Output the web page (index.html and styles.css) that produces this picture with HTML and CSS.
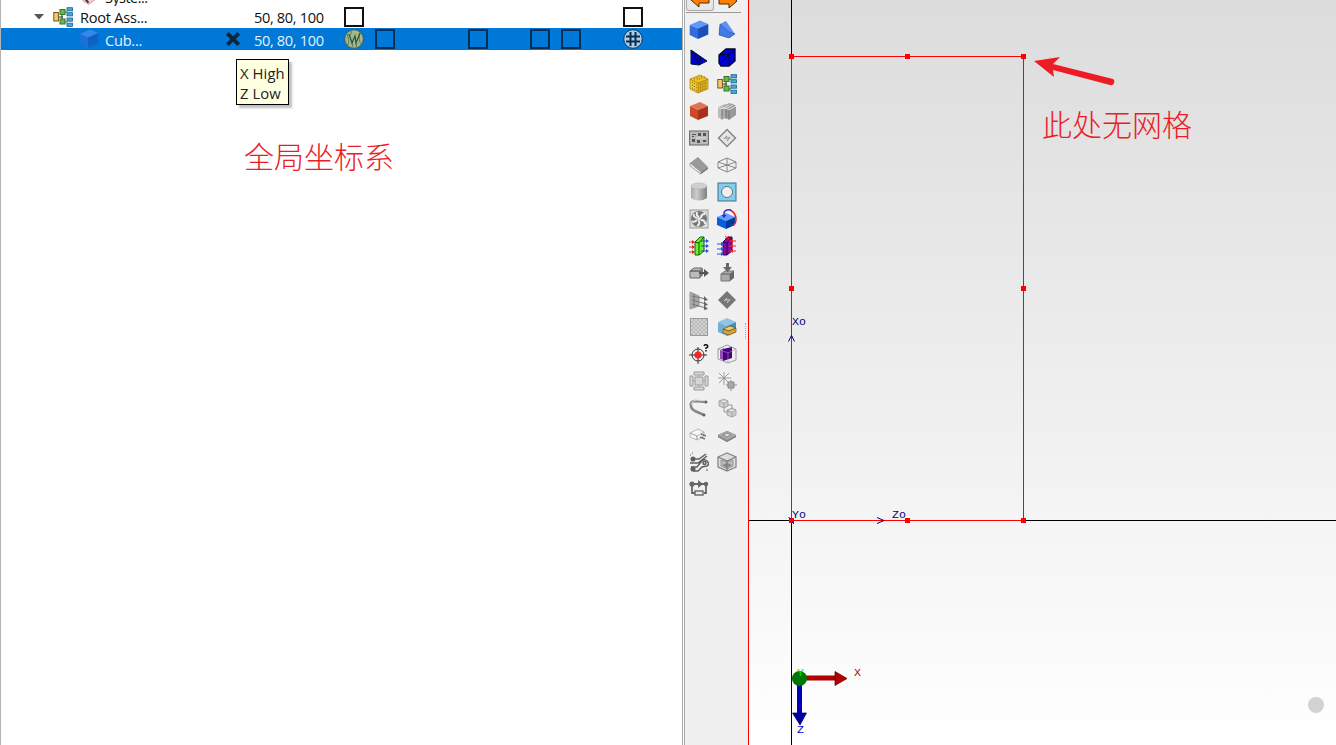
FILE: index.html
```html
<!DOCTYPE html>
<html lang="zh-CN">
<head>
<meta charset="utf-8">
<title>Model editor</title>
<link rel="stylesheet" href="styles.css">
</head>
<body>
<svg class="defs" aria-hidden="true">
<defs>
<symbol id="tree" viewBox="0 0 20 20"><path d="M6 10h4M9 5v11M9 5h5M9 15h5M14 3h2M14 8h2M14 13h2M14 18h2" fill="none" stroke="#333"/><rect x=".8" y="5.5" width="4.6" height="8.5" fill="#f1ca73" stroke="#765719"/><rect x="7" y="2.5" width="5" height="5" fill="#64ba45" stroke="#34752b"/><rect x="7" y="12" width="5" height="5" fill="#64ba45" stroke="#34752b"/><g fill="#48a7dd" stroke="#176489" stroke-width=".8"><rect x="14" y=".7" width="5.5" height="3.2"/><rect x="14" y="5.7" width="5.5" height="3.2"/><rect x="14" y="11" width="5.5" height="3.2"/><rect x="14" y="16.2" width="5.5" height="3.2"/></g></symbol>
<symbol id="blue-cube" viewBox="0 0 20 20"><path d="M.7 5 11 .5 19.3 4 9 8.500z" fill="#5d98fa"/><path d="M.7 5 9 8.500V19L.7 15z" fill="#326dde"/><path d="M9 8.500 19.3 4v10.500L9 19z" fill="#1d4fb8"/></symbol>
</defs>
</svg>
<main class="app">
<section class="tree-panel">
  <div class="tree-row clipped"><svg class="clip-icon" viewBox="0 0 16 20"><path d="m1 15 5-7 9 5-8 6z" fill="#f8cdd0" stroke="#e08b90"/><path d="M4 14l3 3" stroke="#333" stroke-width="2"/></svg><span class="system-label">Syste...</span></div>
  <div class="tree-row root">
    <svg class="disclosure" viewBox="0 0 10 6"><path d="M0 0h10L5 5.500z" fill="#555"/></svg>
    <svg class="node-icon"><use href="#tree"/></svg><span class="name">Root Ass...</span><span></span><span class="size">50, 80, 100</span><i class="check c1"></i><i class="check c6"></i>
  </div>
  <div class="tree-row selected">
    <svg class="cube-icon"><use href="#blue-cube"/></svg><span class="name">Cub...</span>
    <svg class="cross" viewBox="0 0 14 14"><path d="m2 2 10 10M12 2 2 12" stroke="#08283f" stroke-width="3.400"/></svg><span class="size">50, 80, 100</span>
    <svg class="round c1" viewBox="0 0 20 20"><circle cx="10" cy="10" r="9.300" fill="#a5b985" stroke="#40605c"/><path d="M3 5q3 6 1 11M7 2q1 3-1 4m10-2q-2 7 1 11M8 14l1 4m4-4-1 4" fill="none" stroke="#627a54"/><path d="m5 5 3 9 3-7 1 7 4-10" fill="none" stroke="#294f4c" stroke-width="1.200"/></svg>
    <i class="check c2"></i><i class="check c3"></i><i class="check c4"></i><i class="check c5"></i>
    <svg class="round c6" viewBox="0 0 20 20"><circle cx="10" cy="10" r="9.300" fill="#a8ccef" stroke="#103650"/><path d="M7.500 3v14M12.500 3v14M3 7.500h14M3 12.500h14" stroke="#092d48" stroke-width="2"/></svg>
  </div>
  <div class="tooltip"><span>X High</span><span>Z Low</span></div>
  <p class="note note-left">全局坐标系</p>
</section>
<aside class="toolbar">
  <div class="history">
    <span class="active"><svg viewBox="0 0 20 20"><path d="m1 12 8-7v4h10v6H9v4z" transform="matrix(1 0 0 -1 0 24)" fill="#ff8000" stroke="#552b00"/></svg></span>
    <span><svg viewBox="0 0 20 20"><path d="m19 12-8-7v4H1v6h10v4z" transform="matrix(1 0 0 -1 0 24)" fill="#ff8000" stroke="#552b00"/></svg></span>
  </div>
  <div class="tools">
    <svg><use href="#blue-cube"/></svg>
    <svg viewBox="0 0 20 20"><path d="m3 4 6-3 9 13-6 4z" fill="#5f90f0"/><path d="m3 4 9 14-10-3z" fill="#215ed7"/><path d="m3 4 9 8 6 2-6 4-10-3z" fill="#4379e3" stroke="#2453a9" stroke-width=".5"/></svg>
    <svg viewBox="0 0 20 20"><path d="m2 3 16 11-8 4-8-1z" fill="#0000d4" stroke="#001039"/><path d="m2 3 8 15 2-7" fill="#0000a0" stroke="#001039"/></svg>
    <svg viewBox="0 0 20 20"><path d="m2 8 7-6h9v12l-6 5H4l-2-3z" fill="#0000dc" stroke="#000629" stroke-width="1.300"/><path d="m2 8 10-1 6-5M12 7v12M12 7 3 17" fill="none" stroke="#000629"/></svg>
    <svg viewBox="0 0 20 20"><path d="m1 5 10-4 8 4v10l-10 4-8-4z" fill="#edc62e" stroke="#a9820f" stroke-width=".7"/><path d="m9 9 10-4v10L9 19z" fill="#d6a91b"/><path d="m1 5 8 4 10-4M9 9v10" fill="none" stroke="#a87b00" stroke-width=".7"/><path d="m3 8 5 3m-5 0 5 3m-5 0 5 3m3-6 7-3m-7 6 7-3m-7 6 7-3M5 5l8-3M8 6l8-3" stroke="#7e6110" stroke-dasharray="1 1.500"/></svg>
    <svg><use href="#tree"/></svg>
    <svg viewBox="0 0 20 20"><path d="m1 5 10-4 8 4L9 9z" fill="#df7456"/><path d="m1 5 8 4v10l-8-4z" fill="#cf4827"/><path d="m9 9 10-4v10L9 19z" fill="#a93319"/></svg>
    <svg viewBox="0 0 20 20"><path d="m1 6 7-3 4 1v11l-7 4-4-3z" fill="#bbb"/><path d="m5 6 7-4 4 1v11l-7 4-4-3z" fill="#a8a8a8"/><path d="m9 7 7-4 3 2v9l-7 5-3-2z" fill="#999"/><path d="m1 6 4 2 7-4M5 6l4 2 7-4M9 7l3 2 7-4" fill="none" stroke="#e0e0e0"/><path d="M5 8v10M9 8v9M12 9v9" stroke="#777"/></svg>
    <svg viewBox="0 0 20 20"><rect x=".6" y="3" width="18.800" height="14" fill="#bbb" stroke="#666"/><path d="M3 6h4v1H3zm6-1h3v3H9zm5 0h3v3h-3zM3 11h3v3H3zm5 1h3v3H8zm6 0h3v2h-3zM3 8h2v1H3z" fill="#555"/><path d="M7 10h10" stroke="#e3e3e3"/></svg>
    <svg viewBox="0 0 20 20"><path d="m10 1.500 8.500 8.500-8.500 8.500L1.500 10z" fill="#e4e4e4" stroke="#888" stroke-width="1.500"/><path d="m7 11 3-3m0 5 3-4m-5 1 4 0" stroke="#888"/></svg>
    <svg viewBox="0 0 20 20"><path d="m1 8 8-7 10 11-8 7z" transform="translate(0 1)" fill="#ddd"/><path d="m1 8 8-6 10 10-7 5z" fill="#999"/><path d="m1 8 11 9v2L1 11z" fill="#eee" stroke="#888" stroke-width=".7"/><path d="m12 17 7-5v2l-7 5z" fill="#777"/></svg>
    <svg viewBox="0 0 20 20"><path d="m1 7 9-4 9 4v6l-9 4-9-4zM1 7l9 3 9-3M1 13l9-3 9 3M10 3v14" fill="none" stroke="#888"/></svg>
    <svg viewBox="0 0 20 20"><defs><linearGradient id="metal"><stop stop-color="#aaa"/><stop offset=".35" stop-color="#ccc"/><stop offset="1" stop-color="#808080"/></linearGradient></defs><path d="M2 4v12q8 5 16 0V4z" fill="url(#metal)"/><ellipse cx="10" cy="4" rx="8" ry="3" fill="#d0d0d0" stroke="#aaa" stroke-width=".5"/></svg>
    <svg viewBox="0 0 20 20"><rect x="1" y="1" width="18" height="18" fill="#85cdec" stroke="#3b738c"/><circle cx="10" cy="10" r="5.500" fill="#f0f0f0" stroke="#62747c"/></svg>
    <svg viewBox="0 0 20 20"><rect x="1" y="1" width="18" height="18" fill="#ddd" stroke="#999"/><circle cx="10" cy="10" r="8" fill="#777"/><g fill="none" stroke="#eee" stroke-width="2"><path d="M10 8q-3-1-2-5M12 9q0-4 4-4M12 11q4 0 4 4M10 12q1 4-2 5M8 11q-3 3-5 1M8 9Q4 8 5 5"/></g><circle cx="10" cy="10" r="2" fill="#ddd"/></svg>
    <svg viewBox="0 0 20 20"><path d="m0 8 9-4 9 4-9 4z" fill="#629dff"/><path d="m0 8 9 4v8l-9-4z" fill="#0b5de0"/><path d="m9 12 9-4v8l-9 4z" fill="#003b9b"/><path d="M13 1q6 3 6 9 0 5-3 6" fill="none" stroke="#e01d2b" stroke-width="1.500"/><path d="M7 8V4q1-4 7-3" fill="none" stroke="#3830c7" stroke-width="1.500"/><path d="M4.500 6h5L7 9z" fill="#1833d7"/></svg>
    <svg viewBox="0 0 20 20"><path d="m6 6 5-5h4v14l-5 4H6z" fill="#6eee2c" stroke="#126000"/><path d="m6 6 4 1v12M10 7l5-6" fill="none" stroke="#075900"/><path d="M0 6h5M0 11h5M0 16h5" stroke="#e22"/><path d="M12 5h7M12 10h7M12 15h7" stroke="#2540e8"/><g fill="#e22"><path d="m3 4 3 2-3 2zm0 5 3 2-3 2zm0 5 3 2-3 2z"/></g><g fill="#25e"><path d="m17 3 3 2-3 2zm0 5 3 2-3 2zm0 5 3 2-3 2z"/></g></svg>
    <svg viewBox="0 0 20 20"><path d="m6 6 5-5h4v14l-5 4H6z" fill="#8909a4" stroke="#350052"/><path d="m6 6 4 1v12M10 7l5-6" fill="none" stroke="#350052"/><path d="M0 8h6M0 13h6M0 18h6" stroke="#25e"/><path d="M12 5h7M12 10h7M12 15h7M8 0l4 3m0-3L8 3" stroke="#e22"/><path d="m4 6 3 2-3 2zm0 5 3 2-3 2zm0 5 3 2-3 2z" fill="#25e"/><path d="m16 3-3 2 3 2zm0 5-3 2 3 2zm0 5-3 2 3 2z" fill="#e22"/></svg>
    <svg viewBox="0 0 20 20"><path d="m1 8 4-3h8l-2 3zM1 8h10v7H1z" fill="#bbb" stroke="#666"/><path d="m11 8 3-3v7l-3 3" fill="#777"/><path d="M10 10h6" stroke="#555" stroke-width="2"/><path d="M15 6l5 4-5 4z" fill="#555"/></svg>
    <svg viewBox="0 0 20 20"><path d="m4 11 4-3h9l-4 3zM4 11h9v7H4z" fill="#aaa" stroke="#777"/><path d="m13 11 4-3v7l-4 3z" fill="#666"/><path d="M9 0h3v4h3l-4.500 5L6 4h3z" fill="#666"/></svg>
    <svg viewBox="0 0 20 20"><path d="m1 2 9 4v10l-9 3z" fill="#aaa" stroke="#999"/><path d="m3 6 14 3M3 10l14 4M3 14l14 4M5 4v13" stroke="#777"/><path d="m15 6 4 4-4 1zm0 5 4 4-4 1zm0 4 4 4-4 1z" fill="#666"/></svg>
    <svg viewBox="0 0 20 20"><path d="m10 1 9 9-9 9-9-9z" fill="#777"/><path d="m7 11 3-3m0 5 3-4m-5 1h4" stroke="#d0d0d0"/></svg>
    <svg viewBox="0 0 20 20"><defs><pattern id="mesh" width="4" height="4" patternUnits="userSpaceOnUse"><rect width="4" height="4" fill="#bbb"/><circle cx="1" cy="1" r=".8" fill="#eee"/><circle cx="3" cy="3" r=".8" fill="#eee"/></pattern></defs><rect x="1.500" y="1.500" width="17" height="17" fill="url(#mesh)" stroke="#999"/></svg>
    <svg viewBox="0 0 20 20"><path d="m1 5 9-4 9 4-9 4z" fill="#91c4e2"/><path d="m1 5 9 4v10l-9-4z" fill="#74aed4"/><path d="m10 9 9-4v10l-9 4z" fill="#448dba"/><path d="m6 12 7-3 6 2-7 3z" fill="#f4ca62" stroke="#665332" stroke-width=".7"/><path d="m6 12 6 2 7-3v4l-7 3-6-2z" fill="#dca326" stroke="#665332" stroke-width=".7"/></svg>
    <svg viewBox="0 0 20 20"><circle cx="9" cy="11" r="6" fill="none" stroke="#333"/><circle cx="9" cy="11" r="3.600" fill="#f22"/><path d="M0 11h6m6 0h6M9 3v5m0 6v6" stroke="#333"/><path d="M15 2q1-2 3-1 2 2-1 3v1m0 1v1.500" fill="none" stroke="#111" stroke-width="1.500"/></svg>
    <svg viewBox="0 0 20 20"><path d="m1 5 9-4 9 4v11l-8 3-10-4z" fill="#eee" stroke="#888" stroke-width=".8"/><path d="m3 6 4-2v12l-4-1z" fill="#9150b8"/><path d="m6 5 9-2v11l-9 3z" fill="#490085"/><path d="m1 5 10 4 8-4M11 9v10" fill="none" stroke="#999" stroke-width=".6"/></svg>
    <svg viewBox="0 0 20 20"><g fill="#d6d6d6" stroke="#999"><path d="M6 6h8v8H6zM5 1h10v3H5zM5 16h10v3H5zM1 5h3v10H1zM16 5h3v10h-3z"/><path d="M4 10h2m8 0h2M10 4v2m0 8v2"/></g></svg>
    <svg viewBox="0 0 20 20"><path d="M7 1v13M1 7h13M2 2l11 11M12 2 2 12" stroke="#888" stroke-width=".8"/><path d="M11 11h6v6h-6zM9 14h2m6 0h3m-6-3V9m0 8v3" fill="#aaa" stroke="#888"/></svg>
    <svg viewBox="0 0 20 20"><path d="M17 4 6 3Q1 3 2 8q0 3 4 5l9 4" fill="none" stroke="#888" stroke-width="2.500"/><path d="M17 3 7 2Q2 3 3 7" fill="none" stroke="#ddd"/><circle cx="17" cy="4" r="1.500" fill="#666"/><circle cx="15" cy="17" r="1.500" fill="#666"/></svg>
    <svg viewBox="0 0 20 20"><g fill="#ccc" stroke="#999" stroke-width=".8"><path d="m2 3 5-2 4 2v5l-4 2-5-2zm0 0 5 2 4-2M7 5v5"/><path d="m10 12 5-2 4 2v5l-4 2-5-2zm0 0 5 2 4-2M15 14v5"/></g><path d="M7 10v4h5M11 7h4v4" fill="none" stroke="#999"/></svg>
    <svg viewBox="0 0 20 20"><path d="m1 8 8-4 6 3-7 4zM1 8v4l7 3v-4zm7 3v4l7-4V7" fill="#f6f6f6" stroke="#aaa" stroke-width=".8"/><path d="m12 9 5 2m-6 1 5 2" stroke="#777" stroke-width="1.500"/></svg>
    <svg viewBox="0 0 20 20"><path d="m1 10 9-4 9 4-9 5zv2l9 5 9-5v-2" fill="#777"/><path d="m1 10 9-4 9 4-9 5zv2l9 5 9-5v-2l-9 5z" fill="#888"/><path d="m1 10 9-4 9 4-9 5z" fill="#aaa"/><path d="m6 10 4-2 4 2-4 2z" fill="#ddd" stroke="#888"/></svg>
    <svg viewBox="0 0 20 20"><g fill="none" stroke="#606060" stroke-width="1.500"><path d="M3 7h7l7-5M1 11h8l9-7M2 15h6l4-5q3-4 6-1t0 5l-5 1-4 4H4"/><circle cx="4" cy="7" r="1.800" fill="#606060"/><circle cx="15.500" cy="11" r="1.500"/><circle cx="4" cy="17" r="1.800" fill="#606060"/></g><path d="M1 3h1m1-2h1M17 18h2" stroke="#555"/></svg>
    <svg viewBox="0 0 20 20"><path d="m1 5 9-4 9 4v10l-9 4-9-4z" fill="#ddd" stroke="#888" stroke-width="1.300"/><path d="m4 8 6 2 6-2v6l-6 3-6-3z" fill="#bbb" stroke="#999"/><path d="m5 13 5-2 5 2-5 3z" fill="#888"/><path d="m1 5 9 4 9-4M10 9v10" fill="none" stroke="#808080" stroke-width="1.300"/></svg>
    <svg viewBox="0 0 20 20"><path d="M1 5h16v9h-2M3 5v9h3" fill="none" stroke="#666" stroke-width="1.800"/><circle cx="3" cy="5" r="2.600" fill="#666"/><circle cx="17" cy="5" r="2.200" fill="#666"/><path d="m9 1 5 4-5 4z" fill="#666"/><rect x="6" y="12" width="8" height="4" fill="#eee" stroke="#666" stroke-width="1.400"/></svg>
  </div>
  <div class="grip"></div>
</aside>
<section class="viewport">
  <svg class="drawing" viewBox="749 0 587 745">
    <g shape-rendering="crispEdges" fill="none" stroke="#000"><path d="M791.500 0v745M749 520.500h587"/><path d="M791.500 56.500h232v464h-232z" stroke="#f00"/><g fill="#f00" stroke="none"><path d="M789 54h5v5h-5zM905 54h5v5h-5zM1021 54h5v5h-5zM789 286h5v5h-5zM1021 286h5v5h-5zM789 518h5v5h-5zM905 518h5v5h-5zM1021 518h5v5h-5z"/></g></g>
    <g class="axis-label"><text x="792" y="325">Xo</text><text x="792" y="518">Yo</text><text x="892" y="518">Zo</text></g>
    <path d="m788.500 341.500 3-6 3 6M877 517.500l7 3-7 3M788.500 517l2 2M792 522l2 2" fill="none" stroke="#000080"/>
    <path d="m1034 61 26-4-7 7 60 15q2 1 1 4t-4 2l-57-15 1 7z" fill="#ed1c24"/>
    <g><path d="M805 675.500h31v5h-31z" fill="#b30000"/><path d="M835 671.500 847 678.500 835 685.500z" fill="#b30000" stroke="#550000" stroke-width=".7"/><path d="M797 684h5v30h-5z" fill="#0000bd"/><path d="M792.500 713h14l-6.500 12z" fill="#0000a8" stroke="#000055" stroke-width=".7"/><circle cx="799.500" cy="678.500" r="7.600" fill="#007500"/></g>
    <g class="orientation"><text x="854" y="676" fill="#b30000">X</text><text x="797" y="676" fill="#00e000">Y</text><text x="797" y="733" fill="#0000d4">Z</text></g>
    <circle cx="1316" cy="705" r="8" fill="#d2d2d2"/>
  </svg>
  <p class="note note-right">此处无网格</p>
</section>
</main>
</body>
</html>
```
FILE: styles.css
```css
* { box-sizing: border-box; }
body { margin: 0; overflow: hidden; background: #fff; color: #111; font: 15px/20px "Open Sans", sans-serif; }
svg { display: block; }
.defs { position: absolute; width: 0; height: 0; }
.app { display: grid; grid-template-columns: 684px 64px 588px; width: 1336px; height: 745px; overflow: hidden; }
.tree-panel { position: relative; border-left: 1px solid #b4b4b4; border-right: 1px solid #aaa; width: 683px; overflow: hidden; }
.tree-row { position: relative; display: grid; grid-template-columns: 52px 27px 140px 34px 90px; height: 22px; align-items: center; white-space: nowrap; }
.clipped { display: flex; height: 6px; padding-left: 81px; gap: 8px; align-items: flex-end; overflow: hidden; }
.clip-icon { width: 15px; height: 20px; flex: none; }
.system-label { line-height: 20px; transform: translateY(2px); font-size: 14.4px; letter-spacing: -.5px; }
.name, .size { font-size: 14.6px; letter-spacing: -.25px; }
.size { letter-spacing: -.35px; }
.disclosure { width: 10px; height: 6px; margin-left: 33px; }
.node-icon { width: 20px; height: 20px; }
.selected { grid-template-columns: 104px 120px 29px 90px; background: #0078d7; color: #e6f2fc; }
.selected .name, .selected .size { transform: translateY(1px); }
.cube-icon { width: 20px; height: 20px; margin-left: 78px; opacity: .55; }
.cross { width: 16px; height: 16px; }
.check { border: 2px solid #111; background: #fff; }
.selected .check { border-color: #062f53; background: transparent; }
.check, .round { position: absolute; top: 1px; width: 20px; height: 20px; }
.c1 { left: 343px; }
.c2 { left: 374px; }
.c3 { left: 467px; }
.c4 { left: 529px; }
.c5 { left: 560px; }
.c6 { left: 622px; }
.tooltip { position: absolute; left: 235px; top: 59px; width: 53px; height: 46px; display: flex; flex-direction: column; padding: 3px; background: #ffffe1; border: 1px solid #000; box-shadow: 3px 3px 2px #8888; color: #222; font-size: 14.8px; letter-spacing: .1px; white-space: nowrap; }
.note { position: absolute; margin: 0; color: #ed1c24; font: 300 30px/40px "Noto Sans CJK SC", sans-serif; white-space: nowrap; }
.note-left { left: 243px; top: 135px; }
.note-right { left: 293px; top: 103px; }
.toolbar { position: relative; background: #f0f0f0; border-left: 1px solid #aaa; overflow: hidden; }
.history { display: grid; grid-template-columns: 28px 27px; height: 13px; border-bottom: 1px solid #999; width: 55px; margin-left: 1px; overflow: hidden; }
.history span { height: 11px; display: flex; justify-content: center; align-items: flex-end; overflow: hidden; }
.history .active { border: 1px solid #aaa; border-top: 0; border-radius: 0 0 3px 3px; background: #e7e7e7; }
.history svg { width: 20px; height: 20px; flex: none; transform: translateY(-2px); }
.tools { display: grid; grid-template-columns: repeat(2, 28px); grid-auto-rows: 27.06px; padding-top: 3px; }
.tools > svg { width: 20px; height: 20px; place-self: center; }
.grip { position: absolute; right: 2px; top: 323px; height: 16px; border-left: 1px dotted #aaa; }
.viewport { position: relative; border-left: 1px solid #f00; background: linear-gradient(#dcdcdc, #fff); overflow: hidden; }
.drawing { width: 587px; height: 745px; }
.axis-label, .orientation { font: 11.6px "Liberation Mono", monospace; fill: #000080; }
```
